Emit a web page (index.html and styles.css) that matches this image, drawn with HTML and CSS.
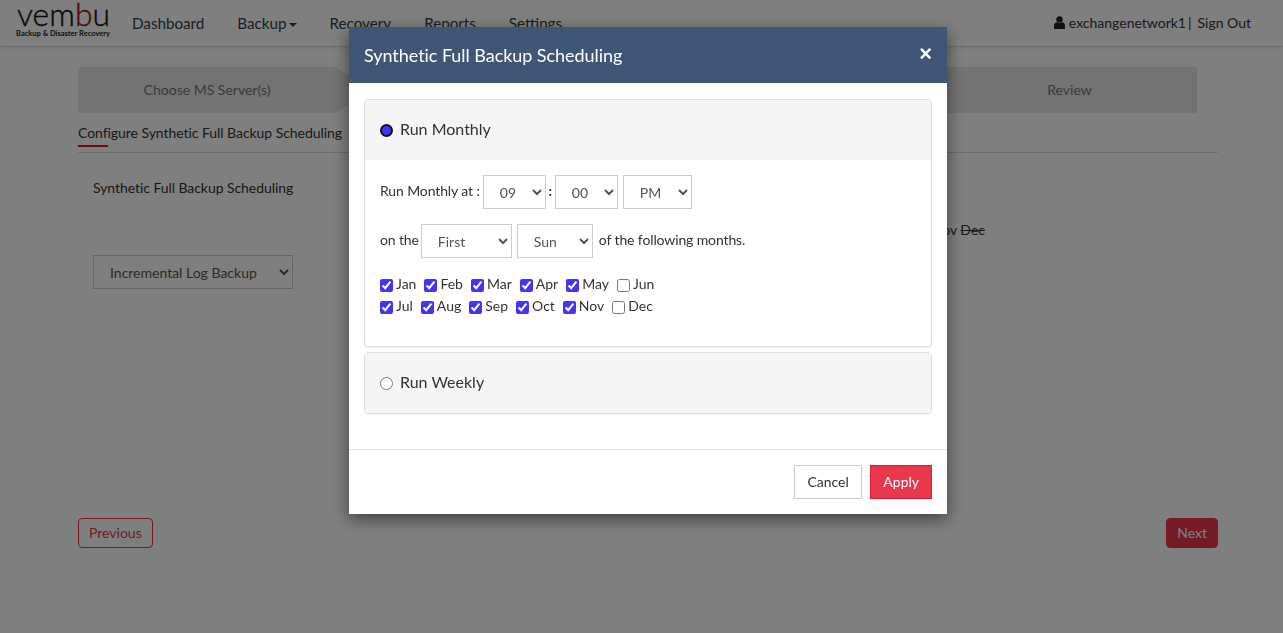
FILE: index.html
```html
<!DOCTYPE html>
<html lang="en">
<head>
    <meta charset="UTF-8">
    <meta name="viewport" content="width=device-width, initial-scale=1.0">
    <title>Synthetic Full Backup Scheduling</title>
    <link rel="stylesheet" href="styles.css">
</head>
<body>

<nav class="navbar">
    <a class="brand" href="#">
        <svg class="brand-logo" width="98" height="36" viewBox="0 0 98 36">
            <text x="1" y="23" class="logo-word" textLength="93" lengthAdjust="spacingAndGlyphs">vem<tspan class="logo-b">b</tspan>u</text>
            <text x="0" y="33" class="logo-sub" textLength="94" lengthAdjust="spacingAndGlyphs">Backup &amp; Disaster Recovery</text>
        </svg>
    </a>
    <ul class="nav-links">
        <li><a href="#">Dashboard</a></li>
        <li><a href="#">Backup<span class="caret"></span></a></li>
        <li><a href="#">Recovery</a></li>
        <li><a href="#">Reports</a></li>
        <li><a href="#">Settings</a></li>
    </ul>
    <div class="nav-user">
        <svg class="user-icon" width="11" height="13" viewBox="0 0 11 13">
            <circle cx="5.5" cy="3.4" r="3.2"/>
            <path d="M0 13V9.6C0 7.6 1.3 6.4 3 6.2c.7.6 1.5.9 2.5.9s1.800-.3 2.500-.9c1.700.2 3 1.400 3 3.400V13z"/>
        </svg>
        <span class="user-name">exchangenetwork1</span>
        <span class="user-sep">|</span>
        <a href="#">Sign Out</a>
    </div>
</nav>

<div class="container">
    <div class="steps">
        <div class="step step-first">Choose MS Server(s)</div>
        <div class="step-middle"></div>
        <div class="step step-last">Review</div>
    </div>

    <div class="tabs">
        <span class="tab-active">Configure Synthetic Full Backup Scheduling</span>
    </div>

    <div class="config-row">
        <span class="config-label">Synthetic Full Backup Scheduling</span>
    </div>
    <div class="config-months">Nov <s>Dec</s></div>

    <select class="backup-type">
        <option>Incremental Log Backup</option>
    </select>

    <div class="wizard-buttons">
        <button class="btn-previous">Previous</button>
        <button class="btn-next">Next</button>
    </div>
</div>

<div class="backdrop"></div>

<div class="modal">
    <div class="modal-header">
        <h4>Synthetic Full Backup Scheduling</h4>
        <span class="modal-close">&times;</span>
    </div>
    <div class="modal-body">
        <div class="panel">
            <div class="panel-heading">
                <input type="radio" name="schedule" class="radio-on" checked>
                <span>Run Monthly</span>
            </div>
            <div class="panel-body">
                <div class="form-row">
                    <span class="row-label">Run Monthly at :</span>
                    <select class="sel sel-time"><option>09</option></select>
                    <span class="time-colon">:</span>
                    <select class="sel sel-time"><option>00</option></select>
                    <select class="sel sel-ampm"><option>PM</option></select>
                </div>
                <div class="form-row form-row-second">
                    <span class="row-label">on the</span>
                    <select class="sel sel-week"><option>First</option></select>
                    <select class="sel sel-day"><option>Sun</option></select>
                    <span class="row-label row-label-after">of the following months.</span>
                </div>
                <div class="months">
                    <label><input type="checkbox" checked>Jan</label>
                    <label><input type="checkbox" checked>Feb</label>
                    <label><input type="checkbox" checked>Mar</label>
                    <label><input type="checkbox" checked>Apr</label>
                    <label><input type="checkbox" checked>May</label>
                    <label><input type="checkbox">Jun</label>
                </div>
                <div class="months">
                    <label><input type="checkbox" checked>Jul</label>
                    <label><input type="checkbox" checked>Aug</label>
                    <label><input type="checkbox" checked>Sep</label>
                    <label><input type="checkbox" checked>Oct</label>
                    <label><input type="checkbox" checked>Nov</label>
                    <label><input type="checkbox">Dec</label>
                </div>
            </div>
        </div>
        <div class="panel">
            <div class="panel-heading">
                <input type="radio" name="schedule2">
                <span>Run Weekly</span>
            </div>
        </div>
    </div>
    <div class="modal-footer">
        <button class="btn-cancel">Cancel</button>
        <button class="btn-apply">Apply</button>
    </div>
</div>

</body>
</html>
```

FILE: styles.css
```css
body {
    font-family: 'Lato', sans-serif;
    font-size: 14px;
    color: #333;
    background-color: #fff;
    margin: 0;
    padding: 0;
    height: 633px;
    overflow: hidden;
}

a {
    color: inherit;
    text-decoration: none;
}

/* Top bar */
.navbar {
    display: flex;
    align-items: center;
    height: 45px;
    border-bottom: 1px solid #ddd;
    box-shadow: 0 1px 3px rgba(0, 0, 0, 0.1);
    padding: 0 32px 1px 16px;
}

.brand {
    display: block;
    width: 116px;
    height: 36px;
    margin-top: -3px;
}

.brand-logo {
    display: block;
    overflow: visible;
}

.logo-word {
    font-family: 'Lato', sans-serif;
    font-weight: 300;
    font-size: 32px;
    fill: #111;
    stroke: #111;
    stroke-width: 0.35px;
}

.logo-b {
    fill: #a3151b;
    stroke: #a3151b;
}

.logo-sub {
    font-family: 'Lato', sans-serif;
    font-weight: 700;
    font-size: 8px;
    fill: #222;
}

.nav-links {
    display: flex;
    list-style-type: none;
    margin: 0;
    padding: 0;
    font-size: 15.2px;
    color: #2c3e50;
}

.nav-links li {
    margin-right: 33px;
}

.caret {
    display: inline-block;
    margin-left: 2px;
    vertical-align: middle;
    border-top: 4px solid;
    border-left: 4px solid transparent;
    border-right: 4px solid transparent;
}

.nav-user {
    margin-left: auto;
    display: flex;
    align-items: center;
    font-size: 14px;
    color: #333;
}

.user-icon {
    fill: #222;
    margin-right: 4px;
}

.user-sep {
    margin: 0 6px 0 2px;
}

/* Wizard behind the modal */
.container {
    padding: 20px 65px 0 78px;
}

.steps {
    display: flex;
    width: 1119px;
    height: 46px;
    line-height: 46px;
    text-align: center;
    color: #777;
}

.step {
    background-color: #e6e6e6;
}

.step-first {
    box-sizing: border-box;
    width: 293px;
    padding-right: 35px;
    border-radius: 3px 0 0 3px;
    clip-path: polygon(0 0, 258px 0, 100% 50%, 258px 100%, 0 100%);
}

.step-middle {
    flex: 1;
}

.step-last {
    width: 255px;
}

.tabs {
    height: 39px;
    border-bottom: 1px solid #ddd;
}

.tab-active {
    display: inline-block;
    height: 23px;
    margin-top: 10px;
    line-height: 20px;
    letter-spacing: -0.05px;
    position: relative;
}

.tab-active::after {
    content: "";
    position: absolute;
    left: 0;
    bottom: -1px;
    width: 30px;
    height: 2px;
    background-color: #e0141e;
}

.config-row {
    margin: 26px 0 0 15px;
    letter-spacing: -0.06px;
}

.config-months {
    text-align: right;
    margin: 25px 233px 0 0;
}

.backup-type {
    display: block;
    width: 200px;
    height: 34px;
    margin: 17px 0 0 15px;
    padding: 6px 12px;
    font-family: 'Lato', sans-serif;
    font-size: 14px;
    color: #555;
    background-color: #fff;
    border: 1px solid #ccc;
}

.wizard-buttons {
    display: flex;
    justify-content: space-between;
    margin-top: 229px;
}

.wizard-buttons button {
    height: 30px;
    padding: 0 10px 2px;
    font-family: 'Lato', sans-serif;
    font-size: 14px;
    border-radius: 4px;
    border: 1px solid #e8364a;
}

.btn-previous {
    color: #e8364a;
    background-color: #fff;
}

.btn-next {
    color: #fff;
    background-color: #e8364a;
}

/* Modal */
.backdrop {
    position: fixed;
    top: 0;
    left: 0;
    width: 100%;
    height: 100%;
    background-color: rgba(0, 0, 0, 0.5);
}

.modal {
    position: fixed;
    top: 27px;
    left: 349px;
    width: 598px;
    background-color: #fff;
    box-shadow: 0 5px 15px rgba(0, 0, 0, 0.5);
}

.modal-header {
    display: flex;
    justify-content: space-between;
    align-items: center;
    height: 56px;
    padding: 0 15px;
    color: #fff;
    background-color: #405675;
}

.modal-header h4 {
    margin: 0;
    font-size: 18px;
    font-weight: 400;
    letter-spacing: -0.05px;
}

.modal-close {
    font-family: 'Liberation Sans', sans-serif;
    font-size: 22px;
    font-weight: 700;
    margin-bottom: 3px;
}

.modal-body {
    padding: 16px 15px 35px;
}

.panel {
    border: 1px solid #ddd;
    border-radius: 4px;
    box-shadow: 0 1px 1px rgba(0, 0, 0, 0.05);
    margin-bottom: 5px;
}

.panel:last-child {
    margin-bottom: 0;
}

.panel-heading {
    display: flex;
    align-items: center;
    height: 60px;
    padding: 0 15px;
    font-size: 16px;
    background-color: #f5f5f5;
}

.panel-heading input {
    width: 13px;
    height: 13px;
    margin: 1px 7px 0 0;
}

.panel-heading span {
    margin-bottom: 4px;
}

.radio-on {
    appearance: none;
    box-sizing: border-box;
    border-radius: 50%;
    border: 2px solid #111;
    background-color: #4433ff;
}

.panel-body {
    padding: 15px;
    height: 186px;
    box-sizing: border-box;
}

.form-row {
    display: flex;
    align-items: center;
    height: 34px;
}

.form-row-second {
    margin-top: 15px;
}

.form-row-second .row-label {
    margin-right: 2px;
}

.form-row-second .row-label-after {
    margin-left: 6px;
}

.row-label {
    margin-right: 3px;
    margin-top: -4px;
    letter-spacing: -0.12px;
}

.sel {
    height: 34px;
    padding: 6px 12px;
    font-family: 'Lato', sans-serif;
    font-size: 14px;
    color: #555;
    background-color: #fff;
    border: 1px solid #ccc;
}

.sel-time {
    width: 63px;
}

.sel-ampm {
    width: 69px;
    margin-left: 5px;
}

.sel-week {
    width: 91px;
    margin-right: 5px;
}

.sel-day {
    width: 76px;
}

.time-colon {
    width: 9px;
    text-align: center;
    font-weight: 700;
    margin-top: -3px;
}

.months {
    display: flex;
    gap: 8px;
    height: 22px;
    align-items: center;
}

.form-row + .months {
    margin-top: 14px;
}

.months label {
    display: flex;
    align-items: center;
}

.months input {
    width: 13px;
    height: 13px;
    margin: 5px 3px 0 0;
    accent-color: #4433ff;
}

.modal-footer {
    display: flex;
    justify-content: flex-end;
    gap: 8px;
    padding: 15px;
    border-top: 1px solid #e5e5e5;
}

.modal-footer button {
    height: 34px;
    padding: 0 12px 2px;
    font-family: 'Lato', sans-serif;
    font-size: 14px;
}

.modal-footer .btn-cancel {
    padding: 0 12.5px 2px;
    color: #333;
    background-color: #fff;
    border: 1px solid #ccc;
}

.btn-apply {
    color: #fff;
    background-color: #e8384c;
    border: 1px solid #e31837;
}
```
